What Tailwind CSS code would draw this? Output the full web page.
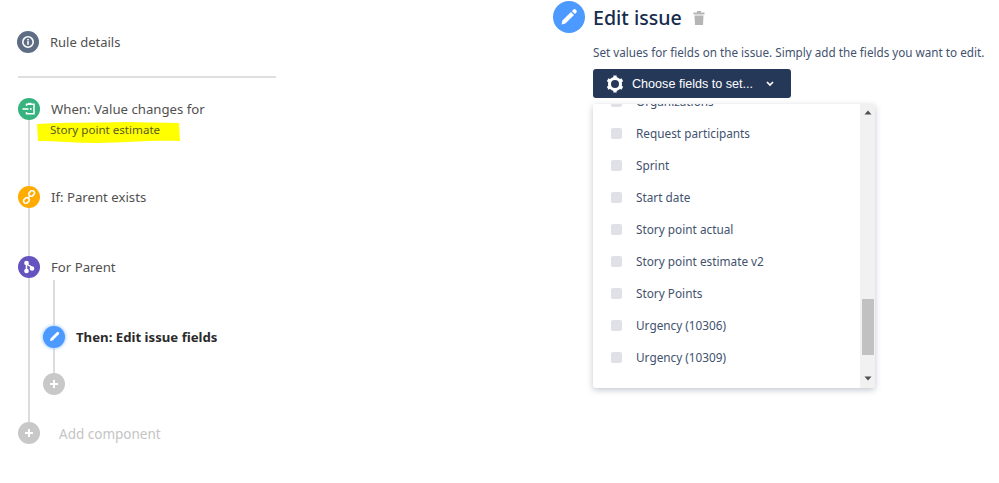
<!DOCTYPE html>
<html lang="en">
<head>
  <meta charset="UTF-8">
  <title>Edit issue</title>
  <script src="https://cdn.jsdelivr.net/npm/@tailwindcss/browser@4"></script>
</head>
<body class="bg-white font-['Noto_Sans',sans-serif] overflow-hidden">
  <div class="flex w-[999px] h-[483px]">
    <!-- Rule chain -->
    <div class="w-[593px] shrink-0 pl-[17px] pt-[31px]">
      <div class="flex items-center h-[22px] w-[259px]">
        <div class="w-[22px] h-[22px] rounded-full bg-[#5e6c84] flex items-center justify-center">
          <svg width="14" height="14" viewBox="0 0 14 14"><circle cx="7" cy="7" r="5.2" fill="none" stroke="#fff" stroke-width="1.6"/><rect x="6.2" y="6.2" width="1.6" height="3.6" fill="#fff"/><rect x="6.2" y="4" width="1.6" height="1.5" fill="#fff"/></svg>
        </div>
        <span class="ml-[11px] pt-0.5 text-[13px] text-[#505050]">Rule details</span>
      </div>
      <div class="mt-[23px] ml-px w-[258px] h-[2px] bg-[#dfdfdf]"></div>

      <div class="relative mt-[20px] ml-px">
        <div class="absolute left-[10px] top-[10px] w-[2px] h-[320px] bg-[#dcdcdc]"></div>
        <div class="absolute left-[35px] top-[182px] w-[2px] h-[94px] bg-[#dcdcdc]"></div>

        <div class="relative flex items-center h-[22px]">
          <div class="w-[22px] h-[22px] rounded-full bg-[#36b37e] flex items-center justify-center">
            <svg width="16" height="16" viewBox="0 0 16 16" fill="none" stroke="#fff"><path d="M5.5 5V3.2h7.5v9.6H5.5V11" stroke-width="1.5"/><path d="M1.5 8h6" stroke-width="1.6"/><rect x="7" y="1.8" width="3.5" height="2" fill="#fff" stroke="none"/><circle cx="9.8" cy="8" r="1" fill="#fff" stroke="none"/></svg>
          </div>
          <span class="ml-[11px] pt-0.5 text-[13.2px] text-[#505050]">When: Value changes for</span>
        </div>
        <div class="relative h-[22px] mt-px">
          <svg class="absolute left-[18px] top-0" width="144" height="23" viewBox="0 0 144 23"><path d="M1 3 C30 1 60 2 90 1 L143 2 L144 20 C110 19 90 22 60 22 C40 22 20 20 2 20 Z" fill="#ffff00"/></svg>
          <span class="absolute left-[32px] top-0 text-[11.6px] text-[#5a5a20]">Story point estimate</span>
        </div>

        <div class="relative flex items-center h-[22px] mt-[43px]">
          <div class="w-[22px] h-[22px] rounded-full bg-[#ffab00] flex items-center justify-center">
            <svg width="14" height="14" viewBox="0 0 14 14" fill="none" stroke="#fff" stroke-width="1.5"><rect x="6.6" y="1.2" width="6" height="4.6" rx="2.3" transform="rotate(-45 9.6 3.5)"/><rect x="1.4" y="8.2" width="6" height="4.6" rx="2.3" transform="rotate(-45 4.4 10.5)"/><path d="M5.5 8.5l3-3"/></svg>
          </div>
          <span class="ml-[11px] pt-0.5 text-[13.2px] text-[#505050]">If: Parent exists</span>
        </div>

        <div class="relative flex items-center h-[22px] mt-[48px]">
          <div class="w-[22px] h-[22px] rounded-full bg-[#6554c0] flex items-center justify-center">
            <svg width="14" height="14" viewBox="0 0 14 14" fill="none" stroke="#fff" stroke-width="1.5"><path d="M4.5 3v8M4.5 3.5c0 2 5.5 2 5.5 5"/><circle cx="4.5" cy="3" r="1.6" fill="#fff"/><circle cx="4.5" cy="11" r="1.6" fill="#fff"/><circle cx="10" cy="8.5" r="1.6" fill="#fff"/></svg>
          </div>
          <span class="ml-[11px] pt-0.5 text-[13.2px] text-[#505050]">For Parent</span>
        </div>

        <div class="relative flex items-center h-[22px] mt-[48px] ml-[25px]">
          <div class="w-[22px] h-[22px] rounded-full bg-[#4c9aff] shadow-[0_0_3px_1px_#b3d4ff] flex items-center justify-center">
            <svg width="14" height="14" viewBox="0 0 14 14" fill="#fff"><path d="M9.8 2.2a1.3 1.3 0 0 1 1.8 0l.2.2a1.3 1.3 0 0 1 0 1.8L5.6 10.4 3 11l.6-2.6z"/></svg>
          </div>
          <span class="ml-[11px] pt-0.5 text-[13.2px] font-bold text-[#2b2b2b]">Then: Edit issue fields</span>
        </div>

        <div class="relative flex items-center h-[22px] mt-[25px] ml-[25px]">
          <div class="w-[22px] h-[22px] rounded-full bg-[#c8c8c8] flex items-center justify-center">
            <svg width="10" height="10" viewBox="0 0 10 10" fill="#fff"><path d="M4 1h2v3h3v2H6v3H4V6H1V4h3z"/></svg>
          </div>
        </div>

        <div class="relative flex items-center h-[22px] mt-[27px]">
          <div class="w-[22px] h-[22px] rounded-full bg-[#c8c8c8] flex items-center justify-center">
            <svg width="10" height="10" viewBox="0 0 10 10" fill="#fff"><path d="M4 1h2v3h3v2H6v3H4V6H1V4h3z"/></svg>
          </div>
          <span class="ml-[19px] pt-0.5 text-[13.5px] text-[#c4c4c4]">Add component</span>
        </div>
      </div>
    </div>

    <!-- Edit issue panel -->
    <div class="relative flex-1 pt-[5px]">
      <div class="absolute left-[-40px] top-[1px] w-[32px] h-[32px] rounded-full bg-[#4c9aff] flex items-center justify-center">
        <svg width="20" height="20" viewBox="0 0 20 20" fill="#fff"><path d="M14.2 2.8a1.9 1.9 0 0 1 2.7 0l.3.3a1.9 1.9 0 0 1 0 2.7L15.9 7.1 12.9 4.1z"/><path d="M12 5l3 3-8.6 8.6L2.6 17.4l.8-3.8z"/></svg>
      </div>
      <div class="flex items-center h-[26px]">
        <h1 class="text-[19.6px] leading-[26px] font-medium text-[#172b4d]">Edit issue</h1>
        <svg class="ml-[11px] -mt-px" width="12" height="14" viewBox="0 0 12 14" fill="#b5b5b5"><path d="M4 0h4v1.5h3.5V3.5H.5V1.5H4z"/><path d="M1.5 4.5h9L10 14H2z"/></svg>
      </div>
      <p class="mt-[13px] text-[11.7px] leading-4 text-[#42526e] whitespace-nowrap">Set values for fields on the issue. Simply add the fields you want to edit.</p>
      <button class="mt-[9px] flex items-center w-[198px] h-[29px] rounded-[3px] bg-[#253858] text-white pl-[12px]">
        <svg width="20" height="20" viewBox="0 0 18 18" fill="none" stroke="#fff"><circle cx="9" cy="9" r="5" stroke-width="2.8"/><path d="M9 1.4v3M9 13.6v3M2.4 5.2l2.6 1.5M13 11.3l2.6 1.5M2.4 12.8l2.6-1.5M13 6.7l2.6-1.5" stroke-width="3"/></svg>
        <span class="ml-[7px] pt-0.5 text-[12.6px] font-['Liberation_Sans',sans-serif]">Choose fields to set...</span>
        <svg class="ml-[12px]" width="10" height="8" viewBox="0 0 10 8" fill="none" stroke="#fff" stroke-width="1.7"><path d="M2 2l3 3 3-3"/></svg>
      </button>
      <div class="mt-[6px] flex w-[282px] h-[284px] rounded-[3px] bg-white shadow-[0_2px_6px_rgba(9,30,66,0.25)] overflow-hidden">
        <ul class="flex-1 overflow-hidden pl-[18px] text-[11.8px] text-[#42526e]">
          <li class="flex items-center h-[32px] -mt-[19px]"><span class="w-[11px] h-[11px] rounded-[2px] bg-[#dfe1e6]"></span><span class="ml-[14px] pt-0.5">Organizations</span></li>
          <li class="flex items-center h-[32px]"><span class="w-[11px] h-[11px] rounded-[2px] bg-[#dfe1e6]"></span><span class="ml-[14px] pt-0.5">Request participants</span></li>
          <li class="flex items-center h-[32px]"><span class="w-[11px] h-[11px] rounded-[2px] bg-[#dfe1e6]"></span><span class="ml-[14px] pt-0.5">Sprint</span></li>
          <li class="flex items-center h-[32px]"><span class="w-[11px] h-[11px] rounded-[2px] bg-[#dfe1e6]"></span><span class="ml-[14px] pt-0.5">Start date</span></li>
          <li class="flex items-center h-[32px]"><span class="w-[11px] h-[11px] rounded-[2px] bg-[#dfe1e6]"></span><span class="ml-[14px] pt-0.5">Story point actual</span></li>
          <li class="flex items-center h-[32px]"><span class="w-[11px] h-[11px] rounded-[2px] bg-[#dfe1e6]"></span><span class="ml-[14px] pt-0.5">Story point estimate v2</span></li>
          <li class="flex items-center h-[32px]"><span class="w-[11px] h-[11px] rounded-[2px] bg-[#dfe1e6]"></span><span class="ml-[14px] pt-0.5">Story Points</span></li>
          <li class="flex items-center h-[32px]"><span class="w-[11px] h-[11px] rounded-[2px] bg-[#dfe1e6]"></span><span class="ml-[14px] pt-0.5">Urgency (10306)</span></li>
          <li class="flex items-center h-[32px]"><span class="w-[11px] h-[11px] rounded-[2px] bg-[#dfe1e6]"></span><span class="ml-[14px] pt-0.5">Urgency (10309)</span></li>
        </ul>
        <div class="w-[15px] h-full bg-[#f1f1f1] flex flex-col items-center">
          <svg class="mt-[6px]" width="8" height="5" viewBox="0 0 8 5" fill="#505050"><path d="M4 0.5L7.5 4.5H.5z"/></svg>
          <div class="mt-[184px] w-[12px] h-[56px] bg-[#c1c1c1]"></div>
          <svg class="mt-[21px]" width="8" height="5" viewBox="0 0 8 5" fill="#505050"><path d="M.5.5h7L4 4.5z"/></svg>
        </div>
      </div>
    </div>
  </div>
</body>
</html>
